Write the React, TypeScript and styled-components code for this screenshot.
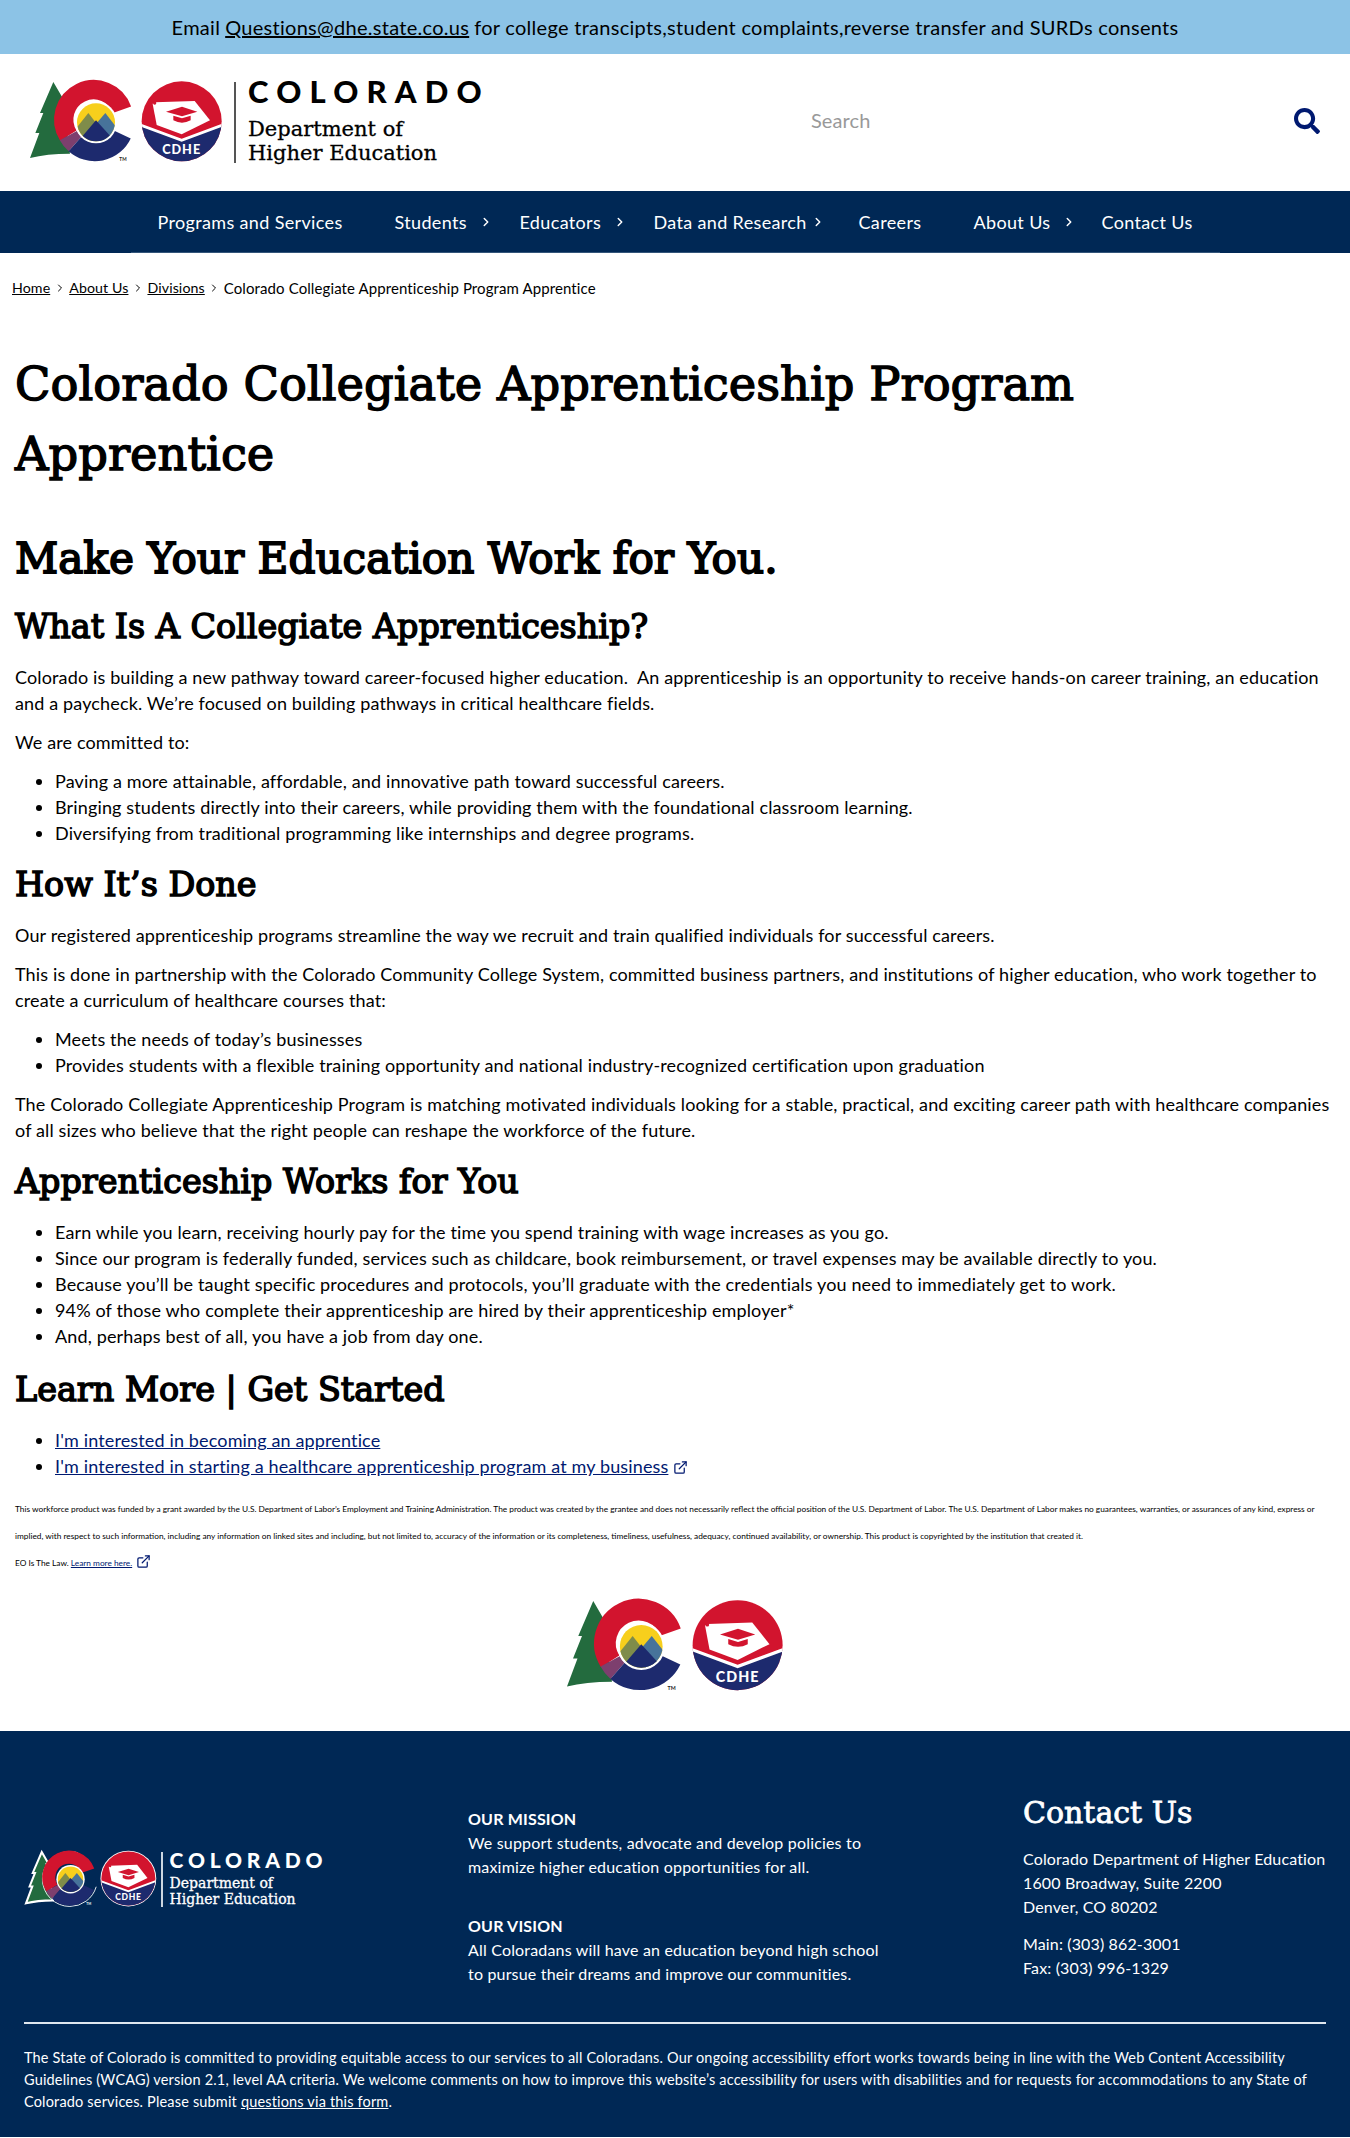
import React from "react";
import styled, { createGlobalStyle } from "styled-components";
import { ExternalLink, ChevronRight } from "lucide-react";

const BODY = `"Lato", "Noto Sans", sans-serif`;
const SLAB = `"DejaVu Serif", serif`;
const NAVY = "#002855";
const LINK = "#001970";

const Global = createGlobalStyle`
  html, body { margin: 0; padding: 0; background: #fff; }
  body { font-family: ${BODY}; font-size: 18px; line-height: 26px; color: #000; letter-spacing: .14px; }
`;

const Alert = styled.div`
  height: 54px; background: #8cc3e6; display: flex; align-items: center; justify-content: center;
  font-size: 20px; color: #000; letter-spacing: .28px;
  a { color: inherit; margin: 0 5px; }
`;
const Header = styled.header`
  height: 137px; display: flex; align-items: center; padding: 0 30px;
`;
const Lockup = styled.div<{ $small?: boolean }>`
  display: flex; align-items: stretch; height: ${p => p.$small ? 55 : 81}px;
  color: ${p => p.$small ? "#fff" : "#000"};
`;
const LockDivider = styled.div<{ $small?: boolean }>`
  width: 2px; margin: 0 ${p => p.$small ? "7px 0 5px" : "12px"}; background: ${p => p.$small ? "#ccd6e0" : "#555"};
`;
const LockText = styled.div<{ $small?: boolean }>`
  display: flex; flex-direction: column; justify-content: space-between;
`;
const LockState = styled.div<{ $small?: boolean }>`
  font-family: "Lato", sans-serif; font-weight: 900;
  font-size: ${p => p.$small ? 21 : 31}px; line-height: ${p => p.$small ? 16 : 23}px;
  letter-spacing: ${p => p.$small ? 4.8 : 8.2}px;
  margin-top: ${p => p.$small ? 0 : -2}px;
`;
const LockDept = styled.div<{ $small?: boolean }>`
  font-family: ${SLAB}; font-weight: 400; -webkit-text-stroke: .3px currentColor;
  font-size: ${p => p.$small ? 14 : 21}px; line-height: ${p => p.$small ? 16 : 24}px; letter-spacing: 0;
  margin-bottom: ${p => p.$small ? 0 : -2}px;
`;
const SearchBox = styled.div`
  margin: 0 0 6px 321px; flex: 1; color: #999; font-size: 20px; letter-spacing: .1px;
`;
const SearchIcon = styled.svg`
  width: 26px; height: 26px; margin-bottom: 3px; color: ${LINK};
`;
const Nav = styled.nav`
  height: 62px; background: ${NAVY}; display: flex; justify-content: center;
`;
const NavInner = styled.ul`
  list-style: none; margin: 0; padding: 0 0 0 27px; width: 1089px; box-sizing: border-box;
  display: flex; align-items: center; border-bottom: 1px solid #33557a; color: #fff; font-size: 18px;
  letter-spacing: .35px;
`;
const NavItem = styled.li<{ $w: number; $gap: number }>`
  width: ${p => p.$w}px; display: flex; align-items: center; flex: none;
  svg { margin-left: ${p => p.$gap}px; }
`;
const Crumbs = styled.div`
  display: flex; align-items: center; padding: 24px 12px 0; font-size: 15px; line-height: 22px;
  letter-spacing: .1px;
  a { color: #000; font-size: 14.2px; }
  svg { margin: 0 3.5px; }
`;
const Main = styled.main`
  padding: 0 15px;
`;
const H1 = styled.h1`
  font-family: ${SLAB}; font-weight: 400; font-size: 46.4px; line-height: 70px; margin: 50px 0 0;
  letter-spacing: 0; -webkit-text-stroke: 1.4px #000;
`;
const H2 = styled.h2`
  font-family: ${SLAB}; font-weight: 400; font-size: 42.2px; line-height: 59px; margin: 40px 0 0; letter-spacing: 0;
  -webkit-text-stroke: 1.8px #000;
`;
const H3 = styled.h3<{ $top?: number }>`
  font-family: ${SLAB}; font-weight: 400; font-size: 33.4px; line-height: 46px; margin: ${p => p.$top ?? 16}px 0 0; padding-bottom: 1px; letter-spacing: 0;
  -webkit-text-stroke: 1.5px #000;
`;
const P = styled.p`
  margin: 13px 0 0;
`;
const Ul = styled.ul`
  margin: 13px 0 0; padding: 0 0 0 40px;
  a { color: ${LINK}; }
  svg { vertical-align: -2px; margin-left: 5px; color: ${LINK}; }
`;
const Fine = styled.p`
  margin: 17px 0 1px; font-size: 8.3px; line-height: 26.5px; letter-spacing: 0;
`;
const EO = styled.p`
  margin: 0; font-size: 8.3px; line-height: 27px; letter-spacing: 0;
  a { color: ${LINK}; }
  svg { vertical-align: -3px; margin-left: 4px; color: ${LINK}; }
`;
const Center = styled.div`
  display: flex; justify-content: center; padding: 24px 0 40px;
`;
const Footer = styled.footer`
  background: ${NAVY}; color: #fff; padding: 62px 24px 0; height: 406px; box-sizing: border-box;
`;
const FooterGrid = styled.div`
  display: grid; grid-template-columns: 444px 555px 1fr; height: 229px; border-bottom: 2px solid #dfe7ef;
`;
const FooterLogo = styled.div`
  display: flex; align-items: flex-start; padding: 59px 0 0 2px;
`;
const Mission = styled.div`
  padding-top: 14px; font-size: 16px; line-height: 24px; letter-spacing: .18px;
`;
const MissionHead = styled.div`
  font-weight: 700;
`;
const MissionBlock = styled.div`
  margin-bottom: 35px;
`;
const ContactHead = styled.h3`
  font-family: ${SLAB}; font-weight: 400; font-size: 30px; line-height: 40px; margin: 0; letter-spacing: 0;
  -webkit-text-stroke: .8px #fff;
`;
const Address = styled.p`
  margin: 14px 0 0; font-size: 16px; line-height: 24px; letter-spacing: .14px; white-space: nowrap;
`;
const Phones = styled.p`
  margin: 13px 0 0; font-size: 16px; line-height: 24px; letter-spacing: .14px;
`;
const Access = styled.p`
  margin: 23px 0 0; font-size: 14.5px; line-height: 22px; letter-spacing: .17px;
  a { color: #fff; }
`;

const Mark: React.FC<{ height: number; outlined?: boolean }> = ({ height, outlined }) => {
  const id = outlined ? "fm" : `m${height}`;
  const halo = outlined ? { stroke: "#fff", strokeWidth: 9 } : {};
  return (
    <svg width={height * 2.4} height={height} viewBox="30 57 576 240" style={{ flex: "none", overflow: "visible" }}>
      <defs>
        <clipPath id={id}><circle cx="228" cy="178" r="57" /></clipPath>
        <clipPath id={`${id}d`}><circle cx="485" cy="175" r="120" /></clipPath>
      </defs>
      <path d="M100 57 L132 112 L122 112 L150 175 L135 175 L150 272 Q80 272 30 285 L58 210 L46 210 L70 150 L60 150 Z" fill="#236b3e" {...halo} />
      {outlined && <circle cx="225" cy="177" r="122" fill="none" stroke="#fff" strokeWidth="4" strokeDasharray="575 170" strokeDashoffset="-35" />}
      <path d="M306 140 A90 90 0 1 0 145 218" fill="none" stroke="#d2142e" strokeWidth="58" />
      <path d="M145 218 A90 90 0 0 0 165 243" fill="none" stroke="#7d3f6e" strokeWidth="58" />
      <path d="M165 243 A90 90 0 0 0 306 214" fill="none" stroke="#1d2a6e" strokeWidth="58" />
      <circle cx="228" cy="178" r="63" fill="#fff" />
      <g clipPath={`url(#${id})`}>
        <rect x="170" y="120" width="116" height="116" fill="#f7cf1c" />
        <path d="M165 200 L205 150 L240 195 L240 240 L165 240 Z" fill="#7f8c4a" />
        <path d="M222 190 L256 150 L295 200 L295 240 L240 240 Z" fill="#47739a" />
        <path d="M170 240 L228 172 L290 240 Z" fill="#1d2a6e" />
      </g>
      <text x="298" y="294" fontSize="14" fontWeight="700" fontFamily="Lato, sans-serif" fill={outlined ? "#fff" : "#222"}>TM</text>
      {outlined && <circle cx="485" cy="175" r="124" fill="#fff" />}
      <g clipPath={`url(#${id}d)`}>
        <rect x="360" y="50" width="250" height="250" fill="#d2142e" />
        <path d="M360 186 L485 232 L610 186 L610 300 L360 300 Z" fill="#1d2a6e" />
        <path d="M360 181 L485 227 L610 181 L610 190 L485 236 L360 190 Z" fill="#fff" />
      </g>
      <path d="M405 118 L524 114 L570 172 L485 214 L410 186 L398 122 Z" fill="#fff" />
      <circle cx="404" cy="120" r="5" fill="#d2142e" />
      <path d="M438 146 L486 131 L532 146 L486 160 Z" fill="#d2142e" />
      <path d="M460 158 L486 166 L512 158 L512 172 Q486 186 460 172 Z" fill="#d2142e" />
      <text x="485" y="272" textAnchor="middle" fontSize="38" fontWeight="900" letterSpacing="3" fontFamily="Lato, sans-serif" fill="#fff">CDHE</text>
    </svg>
  );
};

const Logo: React.FC<{ small?: boolean }> = ({ small }) => (
  <Lockup $small={small}>
    <Mark height={small ? 54 : 80} outlined={small} />
    <LockDivider $small={small} />
    <LockText $small={small}>
      <LockState $small={small}>COLORADO</LockState>
      <LockDept $small={small}>Department of<br />Higher Education</LockDept>
    </LockText>
  </Lockup>
);

const navItems: [string, number, boolean, number][] = [
  ["Programs and Services", 237, false, 0],
  ["Students", 125, true, 12],
  ["Educators", 134, true, 12],
  ["Data and Research", 205, true, 4],
  ["Careers", 115, false, 0],
  ["About Us", 128, true, 12],
  ["Contact Us", 100, false, 0],
];

const Sep = () => <ChevronRight size={12} strokeWidth={2} />;

export default function App() {
  return (
    <>
      <Global />
      <Alert>Email <a href="#">Questions@dhe.state.co.us</a> for college transcipts,student complaints,reverse transfer and SURDs consents</Alert>
      <Header>
        <Logo />
        <SearchBox>Search</SearchBox>
        <SearchIcon viewBox="0 0 512 512"><path fill="currentColor" d="M505 442.7L405.3 343c-4.500-4.500-10.600-7-17-7H372c27.600-35.300 44-79.700 44-128C416 93.100 322.900 0 208 0S0 93.100 0 208s93.100 208 208 208c48.300 0 92.700-16.400 128-44v16.300c0 6.400 2.500 12.500 7 17l99.700 99.700c9.400 9.400 24.600 9.400 33.900 0l28.300-28.300c9.400-9.400 9.400-24.600.1-34zM208 336c-70.700 0-128-57.200-128-128 0-70.700 57.200-128 128-128 70.700 0 128 57.200 128 128 0 70.700-57.200 128-128 128z" /></SearchIcon>
      </Header>
      <Nav>
        <NavInner>
          {navItems.map(([t, w, c, g]) => (
            <NavItem key={t} $w={w} $gap={g}>{t}{c && <ChevronRight size={14} strokeWidth={2.5} />}</NavItem>
          ))}
        </NavInner>
      </Nav>
      <Crumbs>
        <a href="#">Home</a><Sep /><a href="#">About Us</a><Sep /><a href="#">Divisions</a><Sep />Colorado Collegiate Apprenticeship Program Apprentice
      </Crumbs>
      <Main>
        <H1>Colorado Collegiate Apprenticeship Program Apprentice</H1>
        <H2>Make Your Education Work for You.</H2>
        <H3>What Is A Collegiate Apprenticeship?</H3>
        <P>Colorado is building a new pathway toward career-focused higher education.&nbsp; An apprenticeship is an opportunity to receive hands-on career training, an education and a paycheck. We’re focused on building pathways in critical healthcare fields.</P>
        <P>We are committed to:</P>
        <Ul>
          <li>Paving a more attainable, affordable, and innovative path toward successful careers.</li>
          <li>Bringing students directly into their careers, while providing them with the foundational classroom learning.</li>
          <li>Diversifying from traditional programming like internships and degree programs.</li>
        </Ul>
        <H3>How It’s Done</H3>
        <P>Our registered apprenticeship programs streamline the way we recruit and train qualified individuals for successful careers.</P>
        <P>This is done in partnership with the Colorado Community College System, committed business partners, and institutions of higher education, who work together to create a curriculum of healthcare courses that:</P>
        <Ul>
          <li>Meets the needs of today’s businesses</li>
          <li>Provides students with a flexible training opportunity and national industry-recognized certification upon graduation</li>
        </Ul>
        <P>The Colorado Collegiate Apprenticeship Program is matching motivated individuals looking for a stable, practical, and exciting career path with healthcare companies of all sizes who believe that the right people can reshape the workforce of the future.</P>
        <H3>Apprenticeship Works for You</H3>
        <Ul>
          <li>Earn while you learn, receiving hourly pay for the time you spend training with wage increases as you go.</li>
          <li>Since our program is federally funded, services such as childcare, book reimbursement, or travel expenses may be available directly to you.</li>
          <li>Because you’ll be taught specific procedures and protocols, you’ll graduate with the credentials you need to immediately get to work.</li>
          <li>94% of those who complete their apprenticeship are hired by their apprenticeship employer*</li>
          <li>And, perhaps best of all, you have a job from day one.</li>
        </Ul>
        <H3 $top={18}>Learn More | Get Started</H3>
        <Ul>
          <li><a href="#">I'm interested in becoming an apprentice</a></li>
          <li><a href="#">I'm interested in starting a healthcare apprenticeship program at my business</a><ExternalLink size={15} strokeWidth={2} /></li>
        </Ul>
        <Fine>This workforce product was funded by a grant awarded by the U.S. Department of Labor’s Employment and Training Administration. The product was created by the grantee and does not necessarily reflect the official position of the U.S. Department of Labor. The U.S. Department of Labor makes no guarantees, warranties, or assurances of any kind, express or implied, with respect to such information, including any information on linked sites and including, but not limited to, accuracy of the information or its completeness, timeliness, usefulness, adequacy, continued availability, or ownership. This product is copyrighted by the institution that created it.</Fine>
        <EO>EO Is The Law. <a href="#">Learn more here.</a><ExternalLink size={15} strokeWidth={2} /></EO>
        <Center><Mark height={90} /></Center>
      </Main>
      <Footer>
        <FooterGrid>
          <FooterLogo><Logo small /></FooterLogo>
          <Mission>
            <MissionBlock>
              <MissionHead>OUR MISSION</MissionHead>
              We support students, advocate and develop policies to<br />maximize higher education opportunities for all.
            </MissionBlock>
            <MissionBlock>
              <MissionHead>OUR VISION</MissionHead>
              All Coloradans will have an education beyond high school<br />to pursue their dreams and improve our communities.
            </MissionBlock>
          </Mission>
          <div>
            <ContactHead>Contact Us</ContactHead>
            <Address>Colorado Department of Higher Education<br />1600 Broadway, Suite 2200<br />Denver, CO 80202</Address>
            <Phones>Main: (303) 862-3001<br />Fax: (303) 996-1329</Phones>
          </div>
        </FooterGrid>
        <Access>The State of Colorado is committed to providing equitable access to our services to all Coloradans. Our ongoing accessibility effort works towards being in line with the Web Content Accessibility Guidelines (WCAG) version 2.1, level AA criteria. We welcome comments on how to improve this website’s accessibility for users with disabilities and for requests for accommodations to any State of Colorado services. Please submit <a href="#">questions via this form</a>.</Access>
      </Footer>
    </>
  );
}
